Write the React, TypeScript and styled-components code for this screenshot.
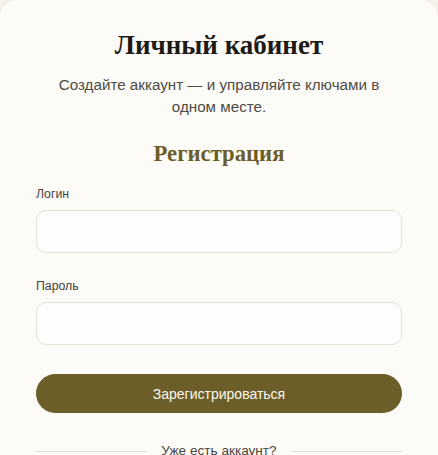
import React from "react";
import styled, { createGlobalStyle } from "styled-components";

const GlobalStyle = createGlobalStyle`
  html, body {
    margin: 0;
    padding: 0;
    background: #f5f1ea;
  }
  * {
    box-sizing: border-box;
  }
`;

const Card = styled.div`
  background: #fdfbf8;
  border-radius: 18px;
  padding: 30px 36px 24px;
  min-height: 455px;
  display: flex;
  flex-direction: column;
  font-family: "Liberation Sans", Arial, sans-serif;
`;

const Title = styled.h1`
  margin: 0;
  text-align: center;
  font-family: "Liberation Serif", "Times New Roman", serif;
  font-weight: 700;
  font-size: 27px;
  line-height: 31px;
  color: #1e1a15;
`;

const Subtitle = styled.p`
  margin: 13px 0 0;
  text-align: center;
  font-size: 15.2px;
  line-height: 22px;
  color: #4f4b45;
`;

const Heading = styled.h2`
  margin: 23px 0 0;
  text-align: center;
  font-family: "Liberation Serif", "Times New Roman", serif;
  font-weight: 700;
  font-size: 22.7px;
  line-height: 26px;
  color: #6b5d28;
`;

const Form = styled.form`
  margin-top: 19px;
  display: flex;
  flex-direction: column;
  gap: 25px;
`;

const Field = styled.label`
  display: flex;
  flex-direction: column;
  gap: 8px;
`;

const LabelText = styled.span`
  font-size: 12.3px;
  line-height: 16px;
  color: #45423d;
`;

const Input = styled.input`
  height: 43px;
  width: 100%;
  border: 1px solid #e6e0d6;
  border-radius: 10px;
  background: #fefdfb;
  padding: 0 14px;
  font-family: inherit;
  font-size: 14px;
  outline: none;
`;

const SubmitButton = styled.button`
  margin-top: 4px;
  height: 39px;
  width: 100%;
  border: none;
  border-radius: 20px;
  background: #6c5e28;
  color: #fbf8f0;
  font-family: "Liberation Sans", Arial, sans-serif;
  font-size: 14px;
  cursor: pointer;
`;

const Divider = styled.div`
  margin-top: 29px;
  display: flex;
  align-items: center;
  gap: 14px;
  font-size: 13.6px;
  line-height: 18px;
  color: #4a4640;

  &::before,
  &::after {
    content: "";
    flex: 1;
    height: 1px;
    background: #e3ddd2;
  }
`;

export default function App() {
  return (
    <>
      <GlobalStyle />
      <Card>
        <Title>Личный кабинет</Title>
        <Subtitle>
          Создайте аккаунт — и управляйте ключами в
          <br />
          одном месте.
        </Subtitle>
        <Heading>Регистрация</Heading>
        <Form onSubmit={(e) => e.preventDefault()}>
          <Field>
            <LabelText>Логин</LabelText>
            <Input type="text" />
          </Field>
          <Field>
            <LabelText>Пароль</LabelText>
            <Input type="password" />
          </Field>
          <SubmitButton type="submit">Зарегистрироваться</SubmitButton>
        </Form>
        <Divider>Уже есть аккаунт?</Divider>
      </Card>
    </>
  );
}
